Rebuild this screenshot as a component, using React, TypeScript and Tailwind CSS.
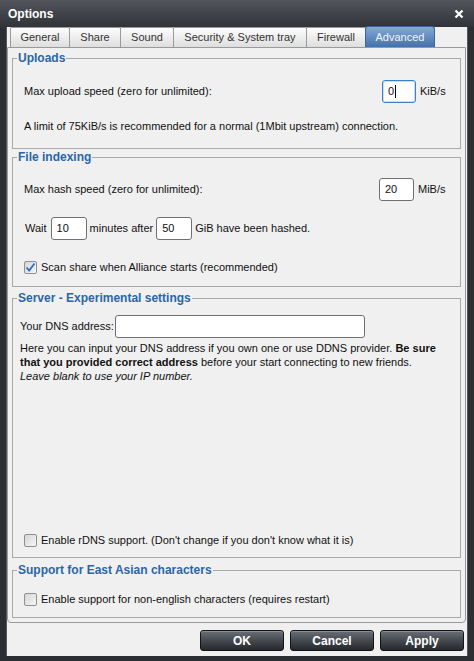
import React from 'react';

const font = { fontFamily: '"Liberation Sans", Arial, sans-serif' };

const tabs = [
  { label: 'General', w: 'w-[60px]' },
  { label: 'Share', w: 'w-[52px]' },
  { label: 'Sound', w: 'w-[54px]' },
  { label: 'Security & System tray', w: 'w-[134px]' },
  { label: 'Firewall', w: 'w-[60px]' },
];

function Checkbox({ checked, label }: { checked?: boolean; label: string }) {
  return (
    <div className="flex items-center gap-[4px] h-[14px]">
      <div className="w-[13px] h-[13px] rounded-[2px] border border-[#8e8f8f] bg-gradient-to-br from-[#d6d6d6] to-[#f6f6f6] flex items-center justify-center shrink-0">
        {checked && (
          <svg width="11" height="11" viewBox="0 0 11 11">
            <path d="M1.5 5.5 L4.2 8.5 L9.5 1.5" fill="none" stroke="#2c6cc0" strokeWidth="1.8" />
          </svg>
        )}
      </div>
      <span>{label}</span>
    </div>
  );
}

function TextBox({ value, w, focused }: { value?: string; w: string; focused?: boolean }) {
  return (
    <div
      className={`${w} h-[23px] bg-white rounded-[3px] flex items-center pl-[5px] ${
        focused ? 'border border-[#3c7fc9] shadow-[inset_0_0_0_1px_#c9dff5]' : 'border border-[#707070]'
      }`}
    >
      {value}
      {focused && <span className="w-px h-[13px] bg-black ml-[1px]" />}
    </div>
  );
}

function Group({ title, h, className, children }: { title: string; h: string; className?: string; children: React.ReactNode }) {
  return (
    <fieldset className={`${h} border border-[#a9a9a9] mx-[4px] ${className ?? ''}`}>
      <legend className="ml-[4px] px-[1px] text-[12px] leading-[14px] font-bold text-[#2a66a8]">{title}</legend>
      {children}
    </fieldset>
  );
}

function WinButton({ label }: { label: string }) {
  return (
    <button className="w-[84px] h-[21px] rounded-[3px] border border-[#111315] bg-gradient-to-b from-[#6a6f76] via-[#464a50] to-[#25282c] shadow-[inset_0_1px_0_#8a8f96] text-white text-[12px] font-bold leading-none">
      {label}
    </button>
  );
}

export default function App() {
  return (
    <div className="w-[474px] h-[661px] bg-[#2b2e33] flex flex-col text-[11px] text-[#111]" style={font}>
      {/* Title bar */}
      <div className="h-[27px] shrink-0 bg-gradient-to-b from-[#52565c] to-[#303338] flex items-center justify-between pl-[8px] pr-[10px]">
        <span className="text-white text-[12px] font-bold">Options</span>
        <svg width="10" height="10" viewBox="0 0 10 10">
          <path d="M1.5 1.5 L8.5 8.5 M8.5 1.5 L1.5 8.5" stroke="white" strokeWidth="2.2" />
        </svg>
      </div>

      {/* Client area */}
      <div className="flex-1 mx-[6px] mb-[5px] bg-[#f0f0f0] flex flex-col border-l border-r border-[#55585d]">
        {/* Tabs */}
        <div className="h-[20px] flex items-end pl-[3px] shrink-0">
          {tabs.map((t) => (
            <div
              key={t.label}
              className={`${t.w} h-[20px] -mr-px border border-b-0 border-[#999] rounded-t-[2px] bg-gradient-to-b from-[#fdfdfd] to-[#dedede] flex items-center justify-center text-[#333]`}
            >
              {t.label}
            </div>
          ))}
          <div className="w-[70px] h-[21px] border border-b-0 border-[#3b659b] rounded-t-[3px] bg-gradient-to-b from-[#84aad6] to-[#4372ab] flex items-start justify-center pt-[2px] text-[#f2f6fb]">
            Advanced
          </div>
        </div>

        {/* Tab panel */}
        <div className="h-[576px] mr-[1px] border border-[#9a9a9a] rounded-b-[4px] flex flex-col">
          <Group title="Uploads" h="h-[98px]" className="mt-[3px]">
            <div className="flex items-center mt-[15px] pl-[11px] pr-[12px]">
              <span>Max upload speed (zero for unlimited):</span>
              <div className="ml-auto">
                <TextBox value="0" w="w-[34px]" focused />
              </div>
              <span className="w-[28px] ml-[4px]">KiB/s</span>
            </div>
            <div className="mt-[16px] pl-[11px] leading-[14px]">
              A limit of 75KiB/s is recommended for a normal (1Mbit upstream) connection.
            </div>
          </Group>

          <Group title="File indexing" h="h-[137px]" className="mt-[1px]">
            <div className="flex items-center mt-[14px] pl-[11px] pr-[14px]">
              <span>Max hash speed (zero for unlimited):</span>
              <div className="ml-auto">
                <TextBox value="20" w="w-[35px]" />
              </div>
              <span className="w-[28px] ml-[4px]">MiB/s</span>
            </div>
            <div className="flex items-center mt-[16px] pl-[12px] gap-[3px]">
              <span className="mr-[1px]">Wait</span>
              <TextBox value="10" w="w-[36px]" />
              <span>minutes after</span>
              <TextBox value="50" w="w-[36px]" />
              <span>GiB have been hashed.</span>
            </div>
            <div className="mt-[20px] pl-[11px]">
              <Checkbox checked label="Scan share when Alliance starts (recommended)" />
            </div>
          </Group>

          <Group title="Server - Experimental settings" h="h-[267px]" className="mt-[4px]">
            <div className="h-[251px] flex flex-col">
              <div className="flex items-center mt-[10px] pl-[7px] gap-[1px]">
                <span>Your DNS address:</span>
                <TextBox w="w-[250px]" />
              </div>
              <div className="mt-[3px] pl-[7px] leading-[14px]">
                Here you can input your DNS address if you own one or use DDNS provider. <b>Be sure</b>
                <br />
                <b>that you provided correct address</b> before your start connecting to new friends.
                <br />
                <i>Leave blank to use your IP number.</i>
              </div>
              <div className="mt-auto mb-[9px] pl-[11px]">
                <Checkbox label="Enable rDNS support. (Don't change if you don't know what it is)" />
              </div>
            </div>
          </Group>

          <Group title="Support for East Asian characters" h="h-[55px]" className="mt-[5px]">
            <div className="mt-[15px] pl-[11px]">
              <Checkbox label="Enable support for non-english characters (requires restart)" />
            </div>
          </Group>
        </div>

        {/* Buttons */}
        <div className="flex justify-end gap-[6px] pr-[3px] mt-[7px]">
          <WinButton label="OK" />
          <WinButton label="Cancel" />
          <WinButton label="Apply" />
        </div>
      </div>
    </div>
  );
}
